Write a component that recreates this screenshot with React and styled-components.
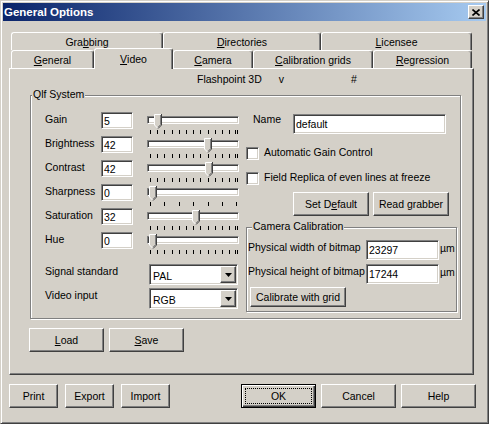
import React from 'react';
import styled, { createGlobalStyle } from 'styled-components';

const Global = createGlobalStyle`
  html, body { margin: 0; padding: 0; background: #d4d0c8; }
  body { font-family: "Liberation Sans", Arial, sans-serif; font-size: 10.5px; color: #000; }
  * { box-sizing: border-box; }
`;

const outsetCss = `
  border: 1px solid;
  border-color: #fff #404040 #404040 #fff;
  box-shadow: inset -1px -1px 0 #808080;
`;
const sunkenCss = `
  border: 1px solid;
  border-color: #808080 #fff #fff #808080;
  box-shadow: inset 1px 1px 0 #404040, inset -1px -1px 0 #d4d0c8;
`;

const Window = styled.div`
  width: 489px;
  height: 424px;
  padding: 2px;
  background: #d4d0c8;
  border: 1px solid;
  border-color: #d4d0c8 #404040 #404040 #d4d0c8;
  box-shadow: inset 1px 1px 0 #fff, inset -1px -1px 0 #808080;
`;

const TitleBar = styled.div`
  height: 18px;
  display: flex;
  align-items: center;
  padding: 0 2px 0 1px;
  background: linear-gradient(to right, #0a246a, #a6caf0);
  color: #fff;
  font-weight: bold;
  font-size: 11.5px;
`;

const CloseButton = styled.div`
  margin-left: auto;
  width: 16px;
  height: 14px;
  background: #d4d0c8;
  ${outsetCss}
  display: flex;
  align-items: center;
  justify-content: center;
`;

const Body = styled.div`
  padding: 11px 6px 0 6px;
`;

const TabStrip = styled.div`
  margin: 0 2px;
`;

const TabRow = styled.div`
  display: flex;
  height: 18px;
`;

const Tab = styled.div`
  width: ${p => p.$w}px;
  height: ${p => (p.$active ? 21 : 18)}px;
  margin-top: ${p => (p.$active ? -2 : 0)}px;
  position: relative;
  z-index: ${p => (p.$active ? 2 : 0)};
  background: #d4d0c8;
  border-top: 1px solid #fff;
  border-left: 1px solid #fff;
  border-right: 1px solid #404040;
  border-radius: 3px 3px 0 0;
  box-shadow: inset -1px 0 0 #808080;
  display: flex;
  align-items: center;
  justify-content: center;
  padding-top: ${p => (p.$active ? 0 : 1)}px;
  line-height: 13px;
`;

const Key = styled.span`
  text-decoration: underline;
  text-underline-offset: 1px;
`;

const Panel = styled.div`
  width: 465px;
  height: 307px;
  border: 1px solid;
  border-color: #fff #404040 #404040 #fff;
  box-shadow: inset -1px -1px 0 #808080;
`;

const Header = styled.div`
  margin-top: 4px;
  padding-left: 187px;
  height: 13px;
  line-height: 13px;
  display: flex;
`;

const HeaderItem = styled.span`
  margin-left: ${p => p.$gap || 0}px;
`;

const Group = styled.div`
  position: relative;
  margin-top: ${p => p.$mt}px;
  margin-left: ${p => p.$ml || 0}px;
  width: ${p => p.$w}px;
  height: ${p => p.$h}px;
  border: 1px solid #808080;
  box-shadow: 1px 1px 0 #fff, inset 1px 1px 0 #fff;
`;

const GroupLabel = styled.span`
  position: absolute;
  top: -8px;
  left: ${p => p.$left}px;
  padding: 0 1px;
  line-height: 13px;
  background: #d4d0c8;
`;

const GroupBody = styled.div`
  display: flex;
  padding: 16px 0 0 14px;
`;

const LeftCol = styled.div`
  width: 194px;
  display: flex;
  flex-direction: column;
`;

const SliderRow = styled.div`
  height: 24px;
  display: flex;
  align-items: flex-start;
`;

const RowLabel = styled.div`
  width: ${p => p.$w}px;
  line-height: 14px;
  white-space: nowrap;
`;

const TextBox = styled.div`
  width: ${p => p.$w}px;
  height: ${p => p.$h}px;
  background: #fff;
  ${sunkenCss}
  padding: 1px 0 0 2px;
  line-height: ${p => p.$h - 3}px;
  font-size: 10.5px;
  white-space: nowrap;
  overflow: hidden;
`;

const SliderBox = styled.div`
  position: relative;
  margin-left: 14px;
  width: 92px;
  height: 24px;
  display: flex;
  flex-direction: column;
`;

const Track = styled.div`
  margin-top: 4px;
  height: 8px;
  background: #fff;
  ${sunkenCss}
`;

const Ticks = styled.svg`
  display: block;
  margin-top: 6px;
`;

const Thumb = styled.svg`
  position: absolute;
  top: 2px;
  display: block;
`;

const SelectRow = styled.div`
  height: 24px;
  display: flex;
  align-items: flex-start;
  margin-top: ${p => p.$mt || 0}px;
`;

const Combo = styled.div`
  width: 89px;
  height: 21px;
  background: #fff;
  ${sunkenCss}
  display: flex;
  align-items: center;
  padding: 0 1px 0 3px;
`;

const ComboText = styled.span`
  flex: 1;
  padding-top: 2px;
`;

const DropButton = styled.div`
  width: 16px;
  height: 17px;
  background: #d4d0c8;
  ${outsetCss}
  display: flex;
  align-items: center;
  justify-content: center;
`;

const RightCol = styled.div`
  margin-left: 7px;
  padding-top: 2px;
  display: flex;
  flex-direction: column;
`;

const NameRow = styled.div`
  display: flex;
  align-items: flex-start;
  margin-left: 7px;
`;

const NameLabel = styled.div`
  width: 40px;
  line-height: 11px;
`;

const CheckRow = styled.div`
  display: flex;
  align-items: center;
  height: 13px;
  margin-top: ${p => p.$mt}px;
`;

const CheckBox = styled.div`
  width: 13px;
  height: 13px;
  background: #fff;
  ${sunkenCss}
`;

const CheckLabel = styled.span`
  margin-left: 5px;
  line-height: 13px;
  padding-bottom: 2px;
  white-space: nowrap;
`;

const ButtonRow = styled.div`
  display: flex;
  gap: ${p => p.$gap}px;
  margin-top: ${p => p.$mt || 0}px;
  margin-left: ${p => p.$ml || 0}px;
`;

const Button = styled.div`
  position: relative;
  width: ${p => p.$w}px;
  height: ${p => p.$h || 24}px;
  margin-left: ${p => p.$ml || 0}px;
  margin-top: ${p => p.$mt || 0}px;
  background: #d4d0c8;
  display: flex;
  align-items: center;
  justify-content: center;
  line-height: 13px;
  white-space: nowrap;
  ${p =>
    p.$default
      ? `border: 1px solid #000;
         box-shadow: inset 1px 1px 0 #fff, inset -1px -1px 0 #404040, inset -2px -2px 0 #808080;
         &::after { content: ""; position: absolute; inset: 3px; border: 1px dotted #000; }`
      : outsetCss}
`;

const CamBody = styled.div`
  padding: 12px 0 0 1px;
  display: flex;
  flex-direction: column;
`;

const CalRow = styled.div`
  height: 24px;
  display: flex;
  align-items: flex-start;
`;

const Unit = styled.span`
  margin-left: 1px;
  line-height: 17px;
`;

const ButtonBar = styled.div`
  width: 467px;
  margin-top: 9px;
  display: flex;
  align-items: center;
`;

const sliders = [
  { label: 'Gain', value: '5', pos: 7, ticks: 'fine' },
  { label: 'Brightness', value: '42', pos: 57, ticks: 'fine' },
  { label: 'Contrast', value: '42', pos: 58, ticks: 'fine' },
  { label: 'Sharpness', value: '0', pos: 2, ticks: 'coarse' },
  { label: 'Saturation', value: '32', pos: 45, ticks: 'fine' },
  { label: 'Hue', value: '0', pos: 2, ticks: 'fine' },
];

function tickXs(kind) {
  const xs = [];
  if (kind === 'coarse') {
    for (let i = 0; i < 7; i++) xs.push(3 + i * 14.4);
  } else {
    for (let i = 0; i < 12; i++) xs.push(3 + i * 7.2);
    xs.push(88);
    xs.push(90);
  }
  return xs.map(x => Math.round(x) + 0.5);
}

function Slider({ pos, ticks }) {
  return (
    <SliderBox>
      <Track />
      <Ticks width="92" height="4" viewBox="0 0 92 4">
        {tickXs(ticks).map((x, i) => (
          <line key={i} x1={x} x2={x} y1="0" y2="4" stroke="#000" strokeWidth="1" />
        ))}
      </Ticks>
      <Thumb width="8" height="15" viewBox="0 0 8 15" style={{ left: pos }}>
        <path d="M0 0 H8 V11 L4 15 L0 11 Z" fill="#d4d0c8" />
        <path d="M0.5 11 V0.5 H7" fill="none" stroke="#fff" />
        <path d="M0.5 11 L4 14.5" fill="none" stroke="#fff" />
        <path d="M7.5 0 V11 L4 14.6" fill="none" stroke="#404040" />
        <path d="M6.5 1 V10.6 L4 13.2" fill="none" stroke="#808080" />
      </Thumb>
    </SliderBox>
  );
}

function DownArrow() {
  return (
    <svg width="7" height="4" viewBox="0 0 7 4">
      <path d="M0 0 H7 L3.5 4 Z" fill="#000" />
    </svg>
  );
}

function Select({ value }) {
  return (
    <Combo>
      <ComboText>{value}</ComboText>
      <DropButton>
        <DownArrow />
      </DropButton>
    </Combo>
  );
}

export default function App() {
  return (
    <>
      <Global />
      <Window>
        <TitleBar>
          <span>General Options</span>
          <CloseButton>
            <svg width="8" height="7" viewBox="0 0 8 7">
              <path d="M0.5 0.5 L7.5 6.5 M7.5 0.5 L0.5 6.5" stroke="#000" strokeWidth="1.6" />
            </svg>
          </CloseButton>
        </TitleBar>
        <Body>
          <TabStrip>
            <TabRow>
              <Tab $w={152}>Gra<Key>b</Key>bing</Tab>
              <Tab $w={158}><Key>D</Key>irectories</Tab>
              <Tab $w={151}><Key>L</Key>icensee</Tab>
            </TabRow>
            <TabRow>
              <Tab $w={83}><Key>G</Key>eneral</Tab>
              <Tab $w={79} $active><Key>V</Key>ideo</Tab>
              <Tab $w={80}><Key>C</Key>amera</Tab>
              <Tab $w={120}><Key>C</Key>alibration grids</Tab>
              <Tab $w={99}><Key>R</Key>egression</Tab>
            </TabRow>
          </TabStrip>
          <Panel>
            <Header>
              <HeaderItem>Flashpoint 3D</HeaderItem>
              <HeaderItem $gap={17}>v</HeaderItem>
              <HeaderItem $gap={67}>#</HeaderItem>
            </Header>
            <Group $mt={9} $ml={20} $w={431} $h={224}>
              <GroupLabel $left={1}>Qlf System</GroupLabel>
              <GroupBody>
                <LeftCol>
                  {sliders.map(s => (
                    <SliderRow key={s.label}>
                      <RowLabel $w={56}>{s.label}</RowLabel>
                      <TextBox $w={32} $h={17}>{s.value}</TextBox>
                      <Slider pos={s.pos} ticks={s.ticks} />
                    </SliderRow>
                  ))}
                  <SelectRow $mt={8}>
                    <RowLabel $w={104}>Signal standard</RowLabel>
                    <Select value="PAL" />
                  </SelectRow>
                  <SelectRow>
                    <RowLabel $w={104}>Video input</RowLabel>
                    <Select value="RGB" />
                  </SelectRow>
                </LeftCol>
                <RightCol>
                  <NameRow>
                    <NameLabel>Name</NameLabel>
                    <TextBox $w={153} $h={20}>default</TextBox>
                  </NameRow>
                  <CheckRow $mt={13}>
                    <CheckBox />
                    <CheckLabel>Automatic Gain Control</CheckLabel>
                  </CheckRow>
                  <CheckRow $mt={12}>
                    <CheckBox />
                    <CheckLabel>Field Replica of even lines at freeze</CheckLabel>
                  </CheckRow>
                  <ButtonRow $gap={4} $mt={7} $ml={47}>
                    <Button $w={76}>Set D<Key>e</Key>fault</Button>
                    <Button $w={76}>Read grabber</Button>
                  </ButtonRow>
                  <Group $mt={11} $w={211} $h={85}>
                    <GroupLabel $left={5}>Camera Calibration</GroupLabel>
                    <CamBody>
                      <CalRow>
                        <RowLabel $w={118}>Physical width of bitmap</RowLabel>
                        <TextBox $w={73} $h={20}>23297</TextBox>
                        <Unit>µm</Unit>
                      </CalRow>
                      <CalRow>
                        <RowLabel $w={118}>Physical height of bitmap</RowLabel>
                        <TextBox $w={73} $h={20}>17244</TextBox>
                        <Unit>µm</Unit>
                      </CalRow>
                      <Button $w={96} $h={20} $ml={2} $mt={-1}>Calibrate with grid</Button>
                    </CamBody>
                  </Group>
                </RightCol>
              </GroupBody>
            </Group>
            <ButtonRow $gap={5} $mt={9} $ml={19}>
              <Button $w={75}><Key>L</Key>oad</Button>
              <Button $w={75}><Key>S</Key>ave</Button>
            </ButtonRow>
          </Panel>
          <ButtonBar>
            <Button $w={49}>Print</Button>
            <Button $w={49} $ml={7}>Export</Button>
            <Button $w={49} $ml={7}>Import</Button>
            <Button $w={75} $ml={71} $default>OK</Button>
            <Button $w={75} $ml={5}>Cancel</Button>
            <Button $w={75} $ml={5}>Help</Button>
          </ButtonBar>
        </Body>
      </Window>
    </>
  );
}
